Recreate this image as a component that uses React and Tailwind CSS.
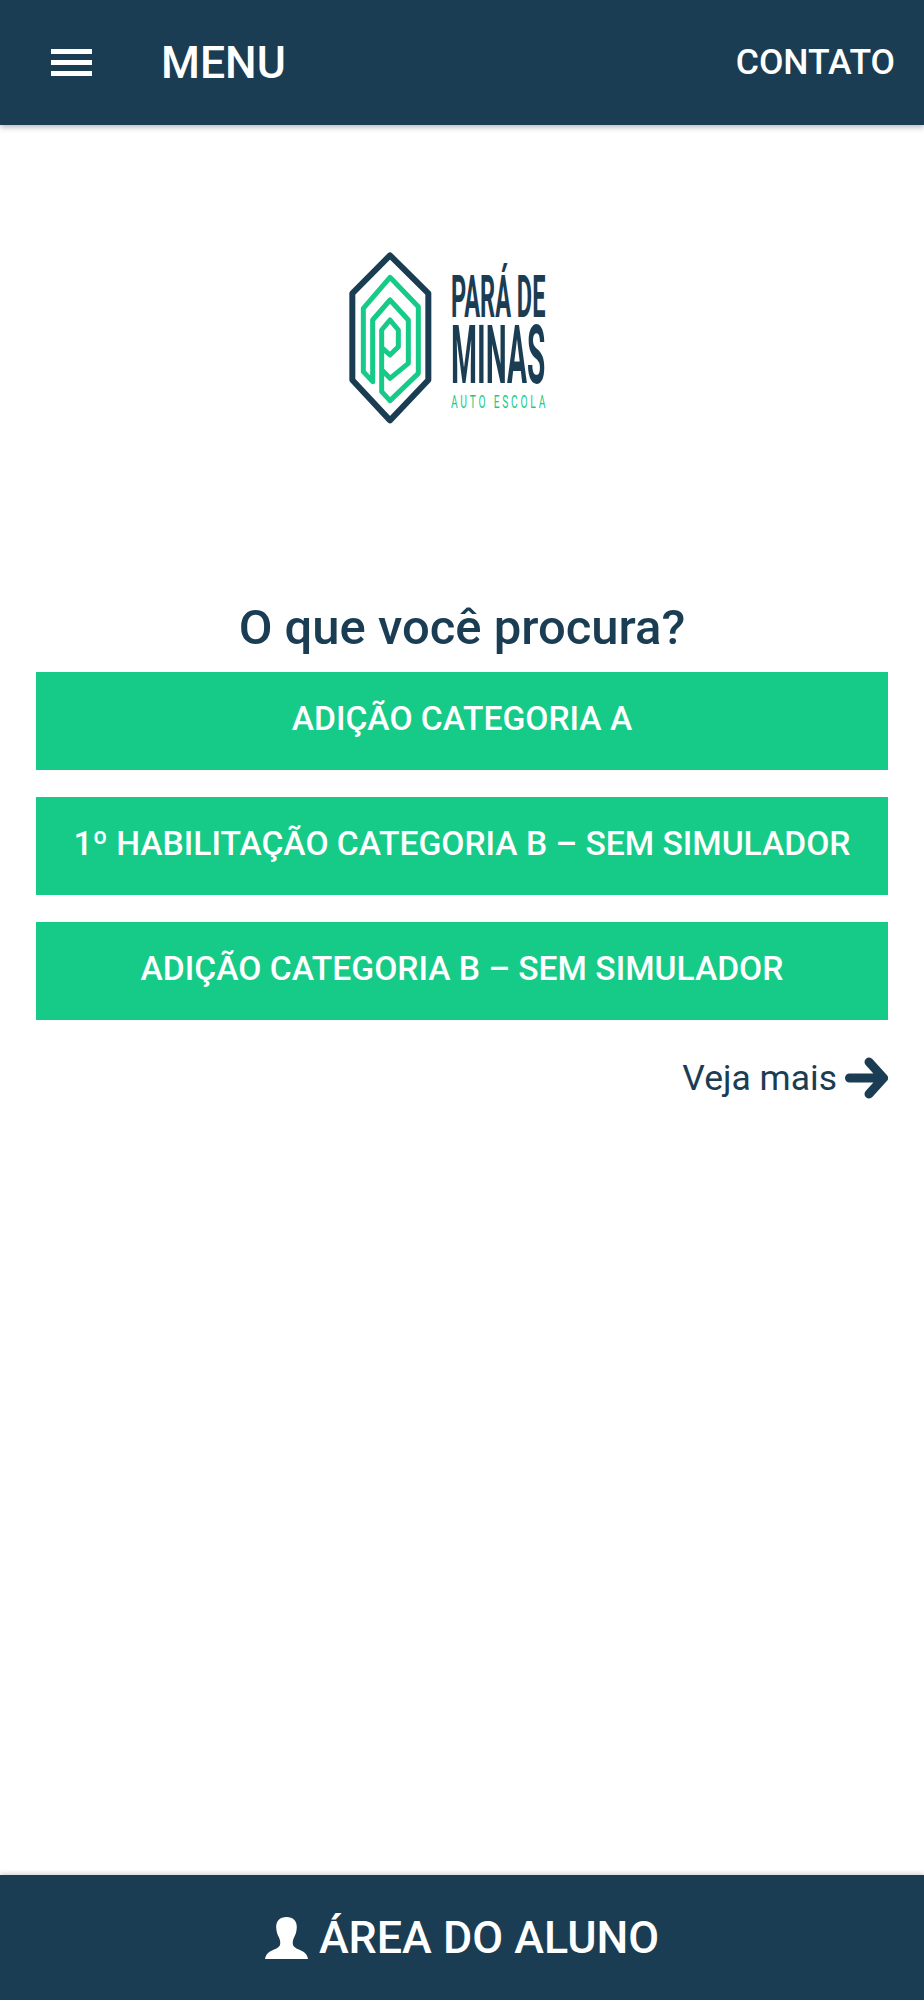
import React from "react";

const links = [
  "ADIÇÃO CATEGORIA A",
  "1º HABILITAÇÃO CATEGORIA B – SEM SIMULADOR",
  "ADIÇÃO CATEGORIA B – SEM SIMULADOR",
];

const Logo = () => (
  <svg width="240" height="190" viewBox="0 0 720 570" fill="none">
    <path d="M180 46 L295 160 V420 L180 541 L67 420 V160 Z" stroke="#1a3d53" strokeWidth="18" strokeLinejoin="round" />
    <path
      d="M158 392 L180 415 L235 370 V240 L180 180 L128 240 V425 L100 395 V205 L180 112 L265 200 V400 L180 482 L155 455 V270 L180 240 L205 270 V320 L180 345 L158 325"
      stroke="#16cb87"
      strokeWidth="15"
      strokeLinejoin="round"
    />
    <text transform="translate(363 232) scale(.389 1)" textLength="728" lengthAdjust="spacingAndGlyphs" fill="#1a3d53" fontFamily="Roboto, sans-serif" fontWeight="700" fontSize="178">PARÁ DE</text>
    <text transform="translate(363 429) scale(.363 1)" textLength="780" lengthAdjust="spacingAndGlyphs" fill="#1a3d53" fontFamily="Roboto, sans-serif" fontWeight="700" fontSize="246">MINAS</text>
    <text transform="translate(363 505) scale(.55 1)" textLength="515" lengthAdjust="spacing" fill="#16cb87" fontFamily="Roboto, sans-serif" fontWeight="400" fontSize="56">AUTO ESCOLA</text>
  </svg>
);

const UserIcon = () => (
  <svg width="43" height="42" viewBox="0 0 43 42" fill="white">
    <path d="M21.5 0C15 0 11 4 11.2 10.5C11.4 15 12.6 18 14 20.5C15.2 23 15.6 26 15 28C14 31 9 32.5 5 34.5C2 36 0.5 39 0 42H43C42.5 39 41 36 38 34.5C34 32.5 29 31 28 28C27.4 26 27.8 23 29 20.5C30.4 18 31.6 15 31.8 10.5C32 4 28 0 21.5 0Z" />
  </svg>
);

export default function App() {
  return (
    <div className="min-h-[2000px] flex flex-col bg-white font-['Roboto',sans-serif]">
      <header className="h-[125px] shrink-0 flex items-center bg-[#1a3d53] text-white shadow-[0_2px_6px_rgba(0,0,0,0.3)] z-10">
        <div className="ml-[51px] w-[41px] flex flex-col gap-[6px]">
          <span className="h-[5px] bg-white"></span>
          <span className="h-[5px] bg-white"></span>
          <span className="h-[5px] bg-white"></span>
        </div>
        <span className="ml-[69px] pt-[2px] text-[44.5px] font-medium">MENU</span>
        <span className="ml-auto mr-[29px] text-[35.5px] font-medium">CONTATO</span>
      </header>

      <main className="flex-1 flex flex-col px-[36px]">
        <div className="flex justify-center mt-[115px] pr-[24px]">
          <Logo />
        </div>
        <h2 className="mt-[170px] text-center text-[49px] leading-[56px] font-medium text-[#1a3d53]">O que você procura?</h2>
        <div className="mt-[16px] flex flex-col gap-[27px]">
          {links.map((l) => (
            <a key={l} className="h-[98px] flex items-center justify-center pb-[3px] bg-[#16cb87] text-white text-[33.6px] font-medium">
              {l}
            </a>
          ))}
        </div>
        <div className="mt-[33px] flex items-center justify-end gap-[8px] text-[#1a3d53]">
          <span className="text-[35.5px] leading-[50px]">Veja mais</span>
          <svg width="43" height="42" viewBox="0 0 43 42" fill="none" stroke="#1a3d53" strokeWidth="9" strokeLinecap="round" strokeLinejoin="round">
            <path d="M4.5 21H37M24 5L38.5 21L24 37" />
          </svg>
        </div>
      </main>

      <footer className="h-[125px] shrink-0 flex items-center justify-center gap-[11px] bg-[#1a3d53] text-white shadow-[0_-2px_4px_rgba(0,0,0,0.15)]">
        <UserIcon />
        <span className="text-[44.8px] font-medium">ÁREA DO ALUNO</span>
      </footer>
    </div>
  );
}
